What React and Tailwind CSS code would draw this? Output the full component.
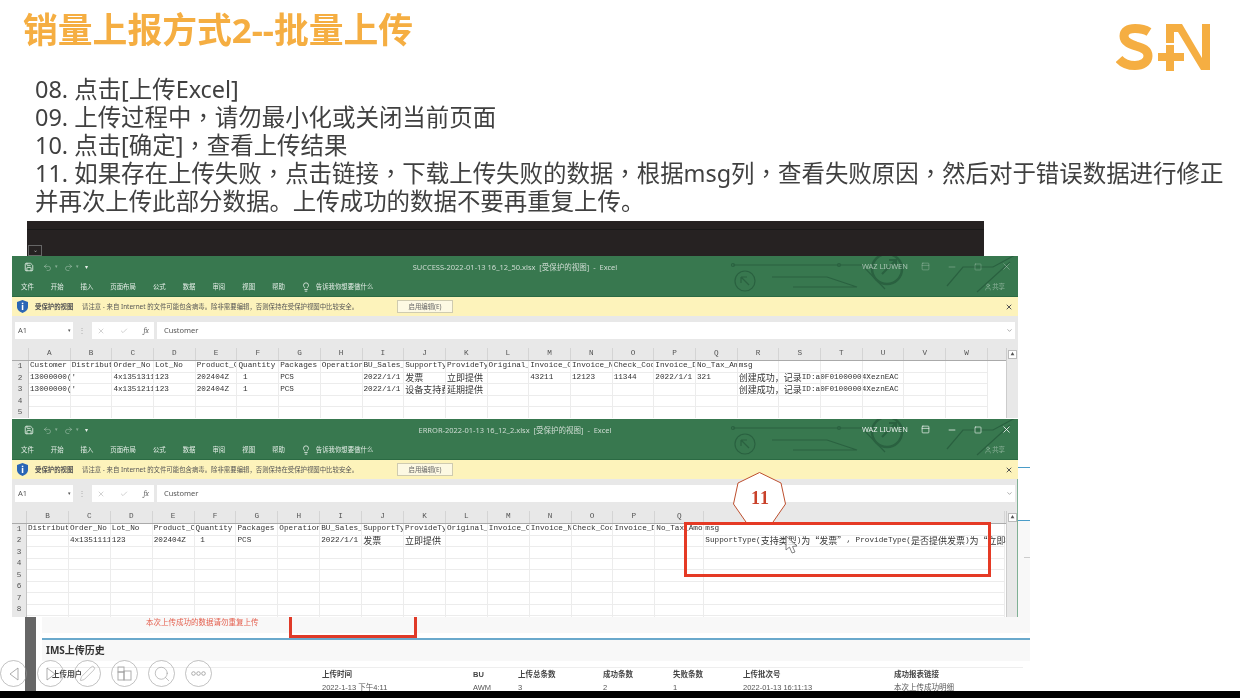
import React from 'react';
import { Save, Undo2, Redo2, Lightbulb, User, Search, X, Minus, Square, ChevronDown, Check, PanelTop, Pen } from 'lucide-react';

const LETTERS = 'ABCDEFGHIJKLMNOPQRSTUVW'.split('');
const ERROR_LETTERS = [...LETTERS.slice(1, 17), ''];
const MENU = ['文件', '开始', '插入', '页面布局', '公式', '数据', '审阅', '视图', '帮助'];
const HEAD = ['Customer', 'Distributor', 'Order_No', 'Lot_No', 'Product_Code', 'Quantity', 'Packages', 'Operation', 'BU_Sales_Date', 'SupportType', 'ProvideType', 'Original_No', 'Invoice_Code', 'Invoice_No', 'Check_Code', 'Invoice_Date', 'No_Tax_Amount', 'msg'];
const OK_MSG = '创建成功，记录ID:a0F01000004XeznEAC';

const successRows = [
    HEAD,
    ["13000000('", '', '4x13513111', '123', '202404Z', ' 1', 'PCS', '', '2022/1/1', '发票', '立即提供', '', '43211', '12123', '11344', '2022/1/1', '321', OK_MSG],
    ["13000000('", '', '4x13512111', '123', '202404Z', ' 1', 'PCS', '', '2022/1/1', '设备支持费用', '延期提供', '', '', '', '', '', '', OK_MSG],
    [],
    [],
];

const errorRows = [
    HEAD.slice(1),
    ['', '4x13511111', '123', '202404Z', ' 1', 'PCS', '', '2022/1/1', '发票', '立即提供', '', '', '', '', '', '', 'SupportType(支持类型)为“发票”, ProvideType(是否提供发票)为“立即提供”时'],
    [], [], [], [], [], [], [],
];

// CJK glyphs sit a size above the latin ones in the sheet
function Mixed({ text }) {
    return text.split(/([\u4e00-\u9fff，“”]+)/).map((part, i) =>
        /[\u4e00-\u9fff，“”]/.test(part)
            ? <span key={i} className="text-[9px] font-['Noto_Sans_CJK_SC',serif]">{part}</span>
            : <span key={i}>{part}</span>
    );
}

// the slide's comma sits in the middle of its cell
const Comma = () => <span className="leading-none font-['Noto_Sans_CJK_TC',sans-serif]">，</span>;

function Circuit() {
    return (
        <svg className="absolute left-0 top-0 pointer-events-none" width="1006" height="41" fill="none" stroke="#2a6140" strokeWidth="1.2">
            <path d="M721 9H850L873 33" />
            <circle cx="721" cy="9" r="1.5" />
            <circle cx="827" cy="9" r="1.5" />
            <circle cx="733" cy="25" r="10" />
            <path d="M729 21l8 8M729 21h6M729 21v6" />
            <path d="M760 21H815L845 31H781" />
            <circle cx="875" cy="13" r="15" strokeWidth="2.5" />
            <path d="M870 18L884 4M877 4h7v7" strokeWidth="2" />
            <path d="M935 30L951 11H981L1005 -2M965 36L998 6" />
        </svg>
    );
}

function ExcelWindow({ title, rows, letters, rowHeader, widths, rowH, height, bright }) {
    const ctl = bright ? 'text-white/85' : 'text-white/30';
    return (
        <div className="relative w-[1006px] ml-[12px] bg-[#e8e8e8] overflow-hidden shrink-0" style={{ height }}>
            <div className="relative h-[41px] bg-[#38784f] border-b border-[#2b6a43]">
                <Circuit />
                <div className="absolute left-0 right-0 top-[2px] h-[20px] flex items-center justify-center text-[7.5px] text-[#cfdcd3] whitespace-pre">{title}</div>
                <div className="relative flex items-center h-[22px] pl-[12px] text-[#e8f0ea]">
                    <Save size={10} strokeWidth={2} />
                    <Undo2 size={9} className="ml-[9px] text-white/40" />
                    <span className="ml-[3px] text-[5px] text-white/40">▾</span>
                    <Redo2 size={9} className="ml-[6px] text-white/40" />
                    <span className="ml-[3px] text-[5px] text-white/40">▾</span>
                    <span className="ml-[6px] text-[6px]">▾</span>
                    <div className="flex items-center ml-auto pr-[6px]">
                        <span className={`w-[59px] text-[7.4px] whitespace-nowrap ${bright ? 'text-white/90' : 'text-white/55'}`}>WAZ LIUWEN</span>
                        <PanelTop size={9} className={ctl} />
                        <Minus size={10} className={`ml-[17px] ${ctl}`} />
                        <Square size={8} className={`ml-[17px] ${ctl}`} />
                        <X size={11} className={`ml-[19px] ${ctl}`} />
                    </div>
                </div>
                <div className="relative flex items-center h-[18px] pl-[9px] gap-[17px] text-[6.4px] text-[#e4ede7] whitespace-nowrap">
                    {MENU.map((m) => <span key={m}>{m}</span>)}
                    <span className="flex items-center gap-[5px] -ml-[1px]">
                        <Lightbulb size={10} />
                        <span>告诉我你想要做什么</span>
                    </span>
                    <span className="flex items-center ml-auto pr-[13px] text-white/40">
                        <User size={8} />
                        <span>共享</span>
                    </span>
                </div>
            </div>
            <div className="flex items-center h-[19px] bg-[#fdf3bb] text-[6.4px] text-[#555] pl-[5px] whitespace-nowrap">
                <svg width="11" height="13" viewBox="0 0 11 13">
                    <path d="M5.5 0L11 2V7C11 10 8 12 5.5 13C3 12 0 10 0 7V2Z" fill="#2a66b5" />
                    <rect x="4.8" y="5" width="1.5" height="5" fill="#fff" />
                    <rect x="4.8" y="2.7" width="1.5" height="1.5" fill="#fff" />
                </svg>
                <span className="ml-[7px] w-[47px] font-bold">受保护的视图</span>
                <span className="w-[315px]">请注意 - 来自 Internet 的文件可能包含病毒。除非需要编辑，否则保持在受保护视图中比较安全。</span>
                <span className="flex items-center justify-center w-[56px] h-[13px] bg-[#fdf9e3] border border-[#cfcbb0] text-[#666]">启用编辑(E)</span>
                <X size={8} strokeWidth={3} className="ml-[552px] text-[#555]" />
            </div>
            <div className="flex items-center h-[17px] mt-[6px] px-[3px] text-[7.5px] text-[#555]">
                <div className="flex items-center justify-between w-[58px] h-full bg-white pl-[3px] pr-[2px]">
                    <span>A1</span>
                    <span className="text-[5px]">▾</span>
                </div>
                <span className="w-[19px] text-center text-[#aaa]">⋮</span>
                <div className="flex items-center justify-between w-[62px] h-full bg-white px-[5px] text-[#bbb]">
                    <X size={8} />
                    <Check size={8} />
                    <span className="text-[#666] italic font-serif">fx</span>
                </div>
                <div className="flex items-center justify-between w-[859px] h-full ml-[3px] bg-white pl-[7px] pr-[2px]">
                    <span>Customer</span>
                    <ChevronDown size={7} className="text-[#777]" />
                </div>
            </div>
            <div className="flex mt-[9px] pr-[1px]">
                <div className="flex-1 min-w-0 overflow-hidden font-['Liberation_Mono','Noto_Sans_CJK_SC',monospace]">
                    <div className="flex h-[13px] text-[7.7px] text-[#555] border-b border-[#aaa]">
                        <div className="shrink-0 border-r border-[#d0d0d0]" style={{ width: rowHeader }} />
                        {letters.map((c, i) => (
                            <div key={i} className="shrink-0 flex items-center justify-center border-r border-[#d4d4d4]" style={{ width: widths[i] }}>{c}</div>
                        ))}
                    </div>
                    {rows.map((row, r) => (
                        <div key={r} className="flex text-[7.7px] leading-none text-[#333] bg-white" style={{ height: rowH }}>
                            <div className="shrink-0 flex items-center justify-center bg-[#e8e8e8] text-[#555] border-r border-[#c4c4c4]" style={{ width: rowHeader }}>{r + 1}</div>
                            {letters.map((c, i) => (
                                <div key={i} className={`shrink-0 flex items-center pl-[1px] whitespace-pre border-r border-b border-[#ececec] ${row[i + 1] ? 'overflow-hidden' : 'overflow-visible'}`} style={{ width: widths[i] }}>
                                    {row[i] ? <Mixed text={row[i]} /> : null}
                                </div>
                            ))}
                        </div>
                    ))}
                </div>
                <div className="relative z-10 w-[11px] shrink-0 bg-[#e8e8e8] border-l border-[#ccc] pt-[2px] pl-[1px]">
                    <div className="flex items-center justify-center w-[9px] h-[9px] bg-white border border-[#bbb] text-[4px] text-[#555]">▲</div>
                </div>
            </div>
            {bright && <div className="absolute right-0 top-[60px] bottom-0 w-[1px] bg-[#7fb094]" />}
        </div>
    );
}

function NavCircle({ children }) {
    return (
        <div className="flex items-center justify-center w-[27px] h-[27px] rounded-full border border-[#9a9a9a]/60 text-[#9a9a9a]/80">
            {children}
        </div>
    );
}

const w1 = LETTERS.map(() => 41.7);
const w2 = ERROR_LETTERS.map((c, i) => (i === 15 ? 49 : c === '' ? 301 : 41.9));

export default function App() {
    return (
        <div className="relative flex flex-col w-[1240px] h-[698px] bg-white overflow-hidden blur-[0.5px] font-['Noto_Sans','Noto_Sans_CJK_SC',sans-serif]">
            <div className="flex justify-between h-[75px] shrink-0">
                <h1 className="ml-[23px] mt-[6px] text-[34.8px] leading-[48px] font-bold text-[#f5ae42]">销量上报方式2--批量上传</h1>
                <svg className="mt-[22px] mr-[26px]" width="98" height="50" viewBox="0 0 98 50" fill="#f5ae42">
                    <path d="M33 10C29 7.500 25 6.500 19 6.500C12 6.500 8 9 8 14C8 20 14 22 20 24C27 26 32 28 32 34C32 40 26 43.500 19 43.500C13 43.500 7 41.500 3 37" fill="none" stroke="#f5ae42" strokeWidth="9" />
                    <rect x="42" y="31" width="26" height="8" />
                    <rect x="50" y="23" width="8" height="26" />
                    <rect x="50" y="2" width="8" height="19" />
                    <path d="M58 2H66L86 36V2H94V48H85L62 10H58Z" />
                </svg>
            </div>
            <div className="ml-[35px] h-[140px] text-[23.45px] leading-[28px] text-[#404040] shrink-0 whitespace-nowrap">
                <div className="h-[28px]">08. 点击[上传Excel]</div>
                <div className="h-[28px]">09. 上传过程中<Comma />请勿最小化或关闭当前页面</div>
                <div className="h-[28px]">10. 点击[确定]<Comma />查看上传结果</div>
                <div className="h-[28px]">11. 如果存在上传失败<Comma />点击链接<Comma />下载上传失败的数据<Comma />根据msg列<Comma />查看失败原因<Comma />然后对于错误数据进行修正</div>
                <div className="h-[28px]">并再次上传此部分数据。上传成功的数据不要再重复上传。</div>
            </div>

            <div className="flex flex-col w-[957px] h-[35px] ml-[27px] mt-[6px] bg-[#262222] shrink-0">
                <div className="h-[2px] mt-[8px] bg-[#191919]" />
                <div className="flex items-center justify-center w-[14px] h-[11px] mt-[15px] ml-[1px] border border-[#666] text-[6px] text-[#aaa]">⌄</div>
            </div>

            <ExcelWindow title="SUCCESS-2022-01-13 16_12_50.xlsx  [受保护的视图]  -  Excel" rows={successRows} letters={LETTERS} rowHeader={17} widths={w1} rowH={11.6} height={162} />
            <div className="h-[1px] shrink-0" />
            <ExcelWindow title="ERROR-2022-01-13 16_12_2.xlsx  [受保护的视图]  -  Excel" rows={errorRows} letters={ERROR_LETTERS} rowHeader={15} widths={w2} rowH={11.5} height={198} bright />

            {/* upload history page showing under the excel windows */}
            <div className="flex ml-[25px] h-[74px] shrink-0 overflow-hidden">
                <div className="w-[11px] bg-[#666] shrink-0" />
                <div className="flex flex-col w-[988px] ml-[6px] shrink-0">
                    <div className="h-[16px] shrink-0 bg-[#f8f8f8] pl-[104px] text-[7.5px] leading-[11px] text-[#e4604f]">本次上传成功的数据请勿重复上传</div>
                    <div className="h-[2px] mt-[5px] shrink-0 bg-[#6aa9cc]" />
                    <div className="h-[21px] shrink-0 bg-[#f8f8f8] pl-[4px] text-[10px] leading-[21px] font-bold text-[#333]">IMS上传历史</div>
                    <div className="grid grid-cols-[270px_151px_45px_85px_70px_70px_151px_1fr] shrink-0 w-[976px] mt-[6px] ml-[5px] pl-[5px] bg-white text-[7.5px] text-[#555] border-t border-[#eee] font-['Liberation_Sans','Noto_Sans_CJK_SC',sans-serif]">
                        {['上传用户', '上传时间', 'BU', '上传总条数', '成功条数', '失败条数', '上传批次号', '成功报表链接'].map((h) => (
                            <div key={h} className="h-[13px] leading-[13px] font-bold text-[#444]">{h}</div>
                        ))}
                        {['', '2022-1-13 下午4:11', 'AWM', '3', '2', '1', '2022-01-13 16:11:13'].map((v, i) => (
                            <div key={i} className="leading-[14px]">{v}</div>
                        ))}
                        <div className="leading-[14px] underline">本次上传成功明细</div>
                    </div>
                </div>
            </div>
            <div className="flex-1 bg-black" />

            {/* slide annotations on top */}
            <div className="absolute left-[1018px] top-[467px] w-[12px] h-[1px] bg-[#4a9cc8]" />
            <div className="absolute left-[1018px] top-[520px] w-[12px] h-[113px] bg-[#f8f8f8] border-t border-[#4a9cc8]" />
            <div className="absolute left-[1024px] top-[557px] w-[6px] h-[1px] bg-[#ccc]" />
            <div className="absolute left-[289px] top-[617px] w-[128px] h-[21px] border-x-[3px] border-b-[3px] border-[#e03a28]" />
            <svg className="absolute left-[733px] top-[472px]" width="53" height="52" viewBox="0 0 53 52">
                <polygon points="26.500,0.500 48,11 52.500,32 39,51.500 14,51.500 0.500,32 5,11" fill="#fff" stroke="#bd4f2e" />
            </svg>
            <span className="absolute left-[751px] top-[487px] text-[18px] leading-[22px] tracking-[1px] font-bold text-[#c9412a] font-['Liberation_Serif',serif]">11</span>
            <div className="absolute left-[684px] top-[522px] w-[307px] h-[55px] border-[3px] border-[#e53a25]" />
            <svg className="absolute left-[785px] top-[535px]" width="14" height="20" viewBox="0 0 14 20">
                <path d="M1 1V15L4.500 12L7 18L10 17L7.500 11.500L12 11Z" fill="#fff" fillOpacity="0.8" stroke="#666" strokeWidth="0.8" />
            </svg>
            <div className="absolute left-0 top-[660px] flex gap-[10px]">
                <NavCircle><svg width="10" height="14" viewBox="0 0 10 14" fill="none" stroke="currentColor"><path d="M9 1V13L1 7Z" /></svg></NavCircle>
                <NavCircle><svg width="10" height="14" viewBox="0 0 10 14" fill="none" stroke="currentColor"><path d="M1 1V13L9 7Z" /></svg></NavCircle>
                <NavCircle><Pen size={17} strokeWidth={1} /></NavCircle>
                <NavCircle>
                    <svg width="15" height="15" viewBox="0 0 15 15" fill="none" stroke="currentColor"><rect x="1" y="1" width="6" height="5" /><rect x="1" y="6" width="6" height="8" /><rect x="7" y="5" width="7" height="9" /></svg>
                </NavCircle>
                <NavCircle><Search size={18} strokeWidth={1} /></NavCircle>
                <NavCircle>
                    <svg width="15" height="5" viewBox="0 0 15 5" fill="none" stroke="currentColor"><circle cx="2.500" cy="2.500" r="1.800" /><circle cx="7.500" cy="2.500" r="1.800" /><circle cx="12.500" cy="2.500" r="1.800" /></svg>
                </NavCircle>
            </div>
        </div>
    );
}
